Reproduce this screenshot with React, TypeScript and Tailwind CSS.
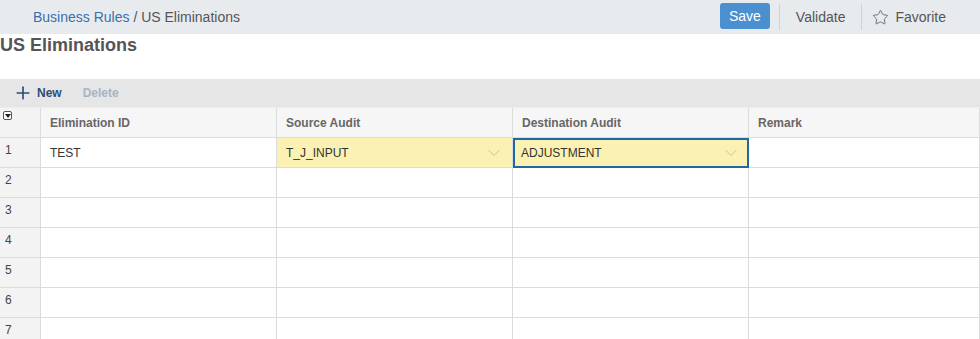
import { Plus, Star, ChevronDown } from "lucide-react";

const rows = [1, 2, 3, 4, 5, 6, 7];

function Cell({ children, className = "" }: { children?: React.ReactNode; className?: string }) {
  return <div className={`h-[30px] border-b border-r border-[#dcdcdc] flex items-center text-[12px] ${className}`}>{children}</div>;
}

export default function App() {
  return (
    <div className="w-[980px] h-[339px] overflow-hidden bg-white text-[#333]" style={{ fontFamily: "Arial, 'Liberation Sans', sans-serif" }}>
      <div className="h-[34px] bg-[#e8ebee] flex items-center">
        <div className="pl-[33px] text-[14px]">
          <span className="text-[#3a6fae]">Business Rules</span>
          <span className="text-[#555]"> / US Eliminations</span>
        </div>
        <div className="ml-auto flex items-center h-full text-[14px] text-[#555]">
          <button className="h-[26px] px-[9px] bg-[#4a8fd0] text-white rounded-[3px] mb-[2px]">Save</button>
          <div className="w-px h-[26px] bg-[#cfd3d7] ml-[9px]" />
          <span className="pl-[16px] pr-[16px]">Validate</span>
          <div className="w-px h-[26px] bg-[#cfd3d7]" />
          <Star className="w-[17px] h-[17px] ml-[10px] mr-[6px] text-[#666]" strokeWidth={1.3} />
          <span className="mr-[34px]">Favorite</span>
        </div>
      </div>
      <div className="h-[45px] pt-[1px]">
        <h1 className="text-[18px] font-bold text-[#555] leading-[20px]">US Eliminations</h1>
      </div>
      <div className="h-[28px] bg-[#e6e6e6] flex items-center text-[12px] font-bold">
        <Plus className="w-[20px] h-[20px] ml-[13px] text-[#2d4d77]" strokeWidth={2} />
        <span className="ml-[4px] text-[#2d4d77]">New</span>
        <span className="ml-[21px] text-[#a6b4c4]">Delete</span>
      </div>
      <div className="grid grid-cols-[41px_236px_236px_236px_1fr] border-t border-[#ececec]">
        <Cell className="bg-[#f3f3f3] items-start pt-[3px] pl-[3px]">
          <div className="w-[9px] h-[9px] border border-[#555] rounded-[2px] flex items-center justify-center bg-white">
            <div className="w-0 h-0 border-l-[3px] border-r-[3px] border-t-[4px] border-l-transparent border-r-transparent border-t-[#222]" />
          </div>
        </Cell>
        {["Elimination ID", "Source Audit", "Destination Audit", "Remark"].map((h) => (
          <Cell key={h} className="bg-[#f6f6f6] font-bold text-[#666] pl-[9px]">{h}</Cell>
        ))}
        {rows.map((r) => (
          <div key={r} className="contents">
            <Cell className="bg-[#f3f3f3] pl-[5px] items-start pt-[3px] text-[#444]">{r}</Cell>
            <Cell className="pl-[9px]">{r === 1 ? "TEST" : ""}</Cell>
            {r === 1 ? (
              <>
                <Cell className="bg-[#fbf1b2] pl-[9px] pr-[8px] justify-between">
                  T_J_INPUT
                  <ChevronDown className="w-[20px] h-[20px] text-[#bdb79f]" strokeWidth={1} />
                </Cell>
                <Cell className="bg-[#fbf1b2] pl-[8px] pr-[7px] justify-between outline-2 outline-[#1c6aa5] -outline-offset-2">
                  ADJUSTMENT
                  <ChevronDown className="w-[20px] h-[20px] text-[#bdb79f]" strokeWidth={1} />
                </Cell>
              </>
            ) : (
              <>
                <Cell />
                <Cell />
              </>
            )}
            <Cell />
          </div>
        ))}
      </div>
    </div>
  );
}
